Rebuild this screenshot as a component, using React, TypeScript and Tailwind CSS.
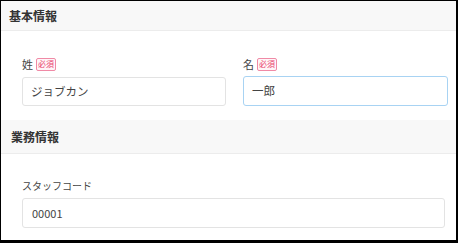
import React from "react";

const font = { fontFamily: '"Noto Sans CJK JP", "Noto Sans", sans-serif' };

function Badge() {
  return (
    <span className="ml-[3px] inline-flex h-[13px] w-[20px] items-center justify-center rounded-[2px] border border-[#f08aa6] bg-[#fff5f8] text-[8px] leading-none text-[#e8426e]">
      必須
    </span>
  );
}

export default function App() {
  return (
    <div style={font} className="w-[458px] h-[243px] bg-black pl-[1px] pt-[1px] pr-[2px] pb-[3px]">
      <div className="flex h-full w-full flex-col bg-white">
        <div className="flex h-[30px] items-center border-b border-[#ececec] bg-[#f8f8f8] pl-[8px] text-[12px] font-bold text-[#333]">
          基本情報
        </div>
        <div className="flex gap-[17px] pl-[21px] pr-[8px] pt-[26px] pb-[14px]">
          <div className="flex w-[204px] flex-col">
            <div className="flex h-[14px] items-center text-[11px] text-[#444]">
              姓<Badge />
            </div>
            <div className="mt-[6px] flex h-[29px] items-center rounded-[3px] border border-[#e3e3e3] px-[8px] text-[11.5px] text-[#444]">
              ジョブカン
            </div>
          </div>
          <div className="flex w-[205px] flex-col">
            <div className="flex h-[14px] items-center text-[11px] text-[#444]">
              名<Badge />
            </div>
            <div className="mt-[5px] flex h-[30px] items-center rounded-[3px] border border-[#a8d3f3] px-[8px] text-[11.5px] text-[#444]">
              一郎
            </div>
          </div>
        </div>
        <div className="flex h-[34px] items-center border-b border-[#ececec] bg-[#f8f8f8] pl-[10px] text-[12px] font-bold text-[#333]">
          業務情報
        </div>
        <div className="flex flex-col pl-[21px] pr-[11px] pt-[24px]">
          <div className="flex h-[14px] items-center text-[10px] text-[#444]">スタッフコード</div>
          <div className="mt-[6px] flex h-[30px] items-center rounded-[3px] border border-[#e3e3e3] px-[9px] text-[11px] text-[#444]">
            00001
          </div>
        </div>
      </div>
    </div>
  );
}
